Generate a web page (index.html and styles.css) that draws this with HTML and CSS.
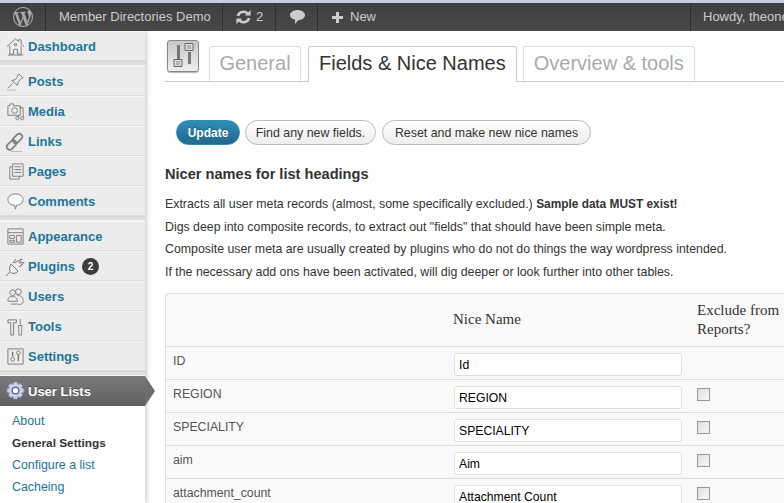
FILE: index.html
```html
<!DOCTYPE html>
<html lang="en">
<head>
  <meta charset="UTF-8">
  <meta name="viewport" content="width=device-width, initial-scale=1.0">
  <title>Fields &amp; Nice Names</title>
  <link rel="stylesheet" href="styles.css">
</head>
<body>

<div id="adminBar">
  <div class="barItem barLogo">
    <svg width="20" height="20" viewBox="0 0 20 20"><path fill="#a8a8a8" d="M20 10c0-5.51-4.49-10-10-10C4.48 0 0 4.49 0 10c0 5.52 4.48 10 10 10 5.51 0 10-4.48 10-10zM7.78 15.37L4.37 6.22c.55-.02 1.17-.08 1.17-.08.5-.06.44-1.13-.06-1.11 0 0-1.45.11-2.37.11-.18 0-.37 0-.58-.01C4.12 2.69 6.87 1.11 10 1.11c2.33 0 4.45.87 6.05 2.34-.68-.11-1.65.39-1.65 1.58 0 .74.45 1.36.9 2.1.35.61.55 1.36.55 2.46 0 1.49-1.4 5-1.4 5l-3.03-8.37c.54-.02.82-.17.82-.17.5-.05.44-1.25-.06-1.22 0 0-1.44.12-2.38.12-.87 0-2.33-.12-2.33-.12-.5-.03-.56 1.2-.06 1.22l.92.08 1.26 3.41zM17.41 10c.24-.64.74-1.87.43-4.25.7 1.29 1.05 2.71 1.05 4.25 0 3.29-1.73 6.24-4.4 7.78.97-2.59 1.94-5.2 2.92-7.78zM6.1 18.09C3.12 16.65 1.11 13.53 1.11 10c0-1.3.23-2.48.72-3.59C3.25 10.3 4.67 14.2 6.1 18.09zm4.03-6.63l2.58 6.98c-.86.29-1.76.45-2.71.45-.79 0-1.57-.11-2.29-.33.81-2.38 1.62-4.74 2.42-7.1z"/></svg>
  </div>
  <div class="barItem barSite">Member Directories Demo</div>
  <div class="barItem barUpdates">
    <svg width="15" height="14" viewBox="0 0 15 14"><path fill="none" stroke="#ccc" stroke-width="2.6" d="M2 6a5.5 5 0 0 1 9.600-2.400M13 8a5.500 5 0 0 1-9.600 2.400"/><path fill="#ccc" d="M9 5.400h5.600V0zM6 8.600H.4V14z"/></svg>
    <span>2</span>
  </div>
  <div class="barItem barComments">
    <svg width="15" height="14" viewBox="0 0 15 14"><path fill="#ccc" d="M7.500 0C11.600 0 15 2.200 15 5s-3 5-6.500 5L5 14V9.700C2 9.200 0 7.300 0 5 0 2.200 3.400 0 7.500 0z"/></svg>
  </div>
  <div class="barItem barNew">
    <svg width="11" height="11" viewBox="0 0 11 11"><path fill="#ccc" d="M4 0h3v4h4v3H7v4H4V7H0V4h4z"/></svg>
    <span>New</span>
  </div>
  <div class="barSpacer"></div>
  <div class="barItem barHowdy">Howdy, theone</div>
</div>

<div id="wrap">
  <div id="sideMenu">
    <a class="menuItem" href="#">
      <svg class="menuIcon" viewBox="0 0 20 20"><path class="ic" d="M1 10 10 2l3 2.700V3h3v4.400L19 10M4 9v9h4v-5h4v5h4V9M2 19h16M9 7h2v2H9z"/></svg>Dashboard</a>
    <div class="menuSep"></div>
    <a class="menuItem" href="#">
      <svg class="menuIcon" viewBox="0 0 20 20"><path class="ic" d="m13 2 5 4-2 1-3 3-1 4-6-5 4-1 2-3zM7 12l-5 5"/><path class="ic soft" d="M1 19h9"/></svg>Posts</a>
    <a class="menuItem" href="#">
      <svg class="menuIcon" viewBox="0 0 20 20"><path class="ic" d="M2 4h2V2h4v2h7v10H2z"/><circle class="ic" cx="9" cy="9" r="3"/><path class="ic" d="M14 6h4v10M13 14v3"/><circle class="ic" cx="12" cy="17" r="1.700"/><circle class="ic" cx="17" cy="17" r="1.700"/></svg>Media</a>
    <a class="menuItem" href="#">
      <svg class="menuIcon wide" viewBox="0 0 20 20"><rect class="ic thick" x="9.500" y="1" width="6" height="11" rx="3" transform="rotate(45 12.500 6.500)"/><rect class="ic thick" x="3.500" y="7.500" width="6" height="11" rx="3" transform="rotate(45 6.500 13)"/><path class="ic soft" d="M6 19.500h11"/></svg>Links</a>
    <a class="menuItem" href="#">
      <svg class="menuIcon" viewBox="0 0 20 20"><path class="ic" d="M7 2h11v13H7zM7 5H4v13h10v-3M9 5h7M9 8h7M9 11h7"/></svg>Pages</a>
    <a class="menuItem" href="#">
      <svg class="menuIcon" viewBox="0 0 20 20"><path class="ic filled" d="M10 2c4.500 0 8 2.500 8 6s-3.500 6-7 6l-1 4-1-4c-4-.3-7-2.600-7-6 0-3.500 3.500-6 8-6z"/></svg>Comments</a>
    <div class="menuSep"></div>
    <a class="menuItem" href="#">
      <svg class="menuIcon" viewBox="0 0 20 20"><path class="ic" d="M2 2h16v16H2zM2 6h16M4 9h5v3H4zM4 14h5v2H4zM11 9h5v7h-5z"/></svg>Appearance</a>
    <a class="menuItem" href="#">
      <svg class="menuIcon wide" viewBox="0 0 20 20"><path class="ic" d="m11 2-3 4M18 7l-4 3M6 7l7 7-2 2-4 .5-2-2L4.500 11zM5 15l-4 4"/><path class="ic" d="m9 6 8-4-3 4 5-.5-4 4"/></svg>Plugins<span class="countBadge">2</span></a>
    <a class="menuItem" href="#">
      <svg class="menuIcon" viewBox="0 0 20 20"><circle class="ic" cx="7" cy="6" r="3"/><circle class="ic" cx="13" cy="5" r="3"/><path class="ic" d="M2 15c0-5 3-5 5-5s5 1 5 5zM12 9c3 0 6 1 6 5 1 4-3 5-6 4H5"/></svg>Users</a>
    <a class="menuItem" href="#">
      <svg class="menuIcon" viewBox="0 0 20 20"><path class="ic" d="M2 3h9v3H8v13H5V6H2zM15 2v6M13 9h4l-.5 3v7h-3v-7z"/></svg>Tools</a>
    <a class="menuItem" href="#">
      <svg class="menuIcon" viewBox="0 0 20 20"><path class="ic" d="M2 2h16v16H2z"/><path class="ic thick" d="M7 5v5M13 8v7"/><circle class="ic" cx="7" cy="13" r="2"/><circle class="ic" cx="13" cy="6" r="2"/></svg>Settings</a>
    <div class="menuSep"></div>
    <a class="menuItem menuCurrent" href="#">
      <svg class="menuIcon" viewBox="0 0 20 20"><path fill="#c9d3ea" stroke="#7f8cb5" d="M8 1h4l.6 2.500 2.300-1 2.600 2.600-1 2.300L19 8v4l-2.500.6 1 2.300-2.600 2.600-2.300-1L12 19H8l-.6-2.500-2.300 1-2.600-2.600 1-2.300L1 12V8l2.500-.6-1-2.300 2.600-2.600 2.300 1z"/><circle fill="#fff" stroke="#5d6b99" stroke-width="1.500" cx="10" cy="10" r="3.500"/></svg>User Lists</a>
    <ul class="subMenu">
      <li><a href="#">About</a></li>
      <li><a class="subCurrent" href="#">General Settings</a></li>
      <li><a href="#">Configure a list</a></li>
      <li><a href="#">Cacheing</a></li>
    </ul>
  </div>

  <div id="content">
    <div class="tabRow">
      <div class="pageIcon">
        <svg width="32" height="32" viewBox="0 0 32 32"><path fill="#777" d="M10 5h3v17h-3zM21 12h3v12h-3z"/><path fill="#ddd" stroke="#666" d="M7 19.500h8v7H7zM18 3.500h8v7h-8z"/><path stroke="#888" d="M9 22h4M9 24h4M20 6h4M20 8h4"/></svg>
      </div>
      <a class="tab tabGeneral" href="#">General</a>
      <a class="tab tabActive" href="#">Fields &amp; Nice Names</a>
      <a class="tab tabOverview" href="#">Overview &amp; tools</a>
    </div>

    <div class="buttonRow">
      <button class="btn btnPrimary">Update</button>
      <button class="btn btnFind">Find any new fields.</button>
      <button class="btn btnReset">Reset and make new nice names</button>
    </div>

    <h3>Nicer names for list headings</h3>
    <p>Extracts all user meta records (almost, some specifically excluded.) <b>Sample data MUST exist!</b></p>
    <p>Digs deep into composite records, to extract out "fields" that should have been simple meta.</p>
    <p>Composite user meta are usually created by plugins who do not do things the way wordpress intended.</p>
    <p>If the necessary add ons have been activated, will dig deeper or look further into other tables.</p>

    <table class="fieldTable">
      <thead>
        <tr>
          <th class="colField"></th>
          <th class="colName">Nice Name</th>
          <th class="colExclude">Exclude from Reports?</th>
        </tr>
      </thead>
      <tbody>
        <tr>
          <td>ID</td>
          <td><input type="text" value="Id"></td>
          <td></td>
        </tr>
        <tr>
          <td>REGION</td>
          <td><input type="text" value="REGION"></td>
          <td><span class="checkBox"></span></td>
        </tr>
        <tr>
          <td>SPECIALITY</td>
          <td><input type="text" value="SPECIALITY"></td>
          <td><span class="checkBox"></span></td>
        </tr>
        <tr>
          <td>aim</td>
          <td><input type="text" value="Aim"></td>
          <td><span class="checkBox"></span></td>
        </tr>
        <tr>
          <td>attachment_count</td>
          <td><input type="text" value="Attachment Count"></td>
          <td><span class="checkBox"></span></td>
        </tr>
      </tbody>
    </table>
  </div>
</div>

</body>
</html>
```

FILE: styles.css
```css
html, body {
  height: 100%;
}

body {
  font-family: "Liberation Sans", Arial, sans-serif;
  background-color: #fff;
  margin: 0;
  overflow: hidden;
  color: #333;
  font-size: 12px;
}

a {
  text-decoration: none;
}

/* top bar */
#adminBar {
  display: flex;
  height: 28px;
  border-top: 3px solid #c3cee0;
  background: linear-gradient(to bottom, #3f3f3f, #494949);
  color: #ccc;
  font-size: 13px;
  line-height: 28px;
}

.barItem {
  display: flex;
  align-items: center;
  border-right: 1px solid #2f2f2f;
  box-sizing: border-box;
}

.barLogo {
  width: 46px;
  justify-content: center;
}

.barSite {
  width: 177px;
  padding-left: 13px;
}

.barUpdates {
  width: 53px;
  padding-left: 13px;
  gap: 5px;
}

.barComments {
  width: 42px;
  padding-left: 14px;
}

.barNew {
  width: 60px;
  padding-left: 14px;
  gap: 7px;
  border-right: none;
}

.barSpacer {
  flex: 1;
}

.barHowdy {
  width: 94px;
  flex-shrink: 0;
  padding-left: 12px;
  border-left: 1px solid #2f2f2f;
  border-right: none;
  white-space: nowrap;
}

/* left menu */
#wrap {
  display: flex;
  height: 472px;
}

#sideMenu {
  width: 145px;
  flex-shrink: 0;
  background-color: #ececec;
  box-shadow: 2px 0 4px rgba(0, 0, 0, 0.18);
  position: relative;
}

.menuItem {
  display: flex;
  align-items: center;
  height: 30px;
  box-sizing: border-box;
  padding-left: 28px;
  position: relative;
  color: #21759b;
  font-weight: bold;
  font-size: 13px;
  border-top: 1px solid #f6f6f6;
  border-bottom: 1px solid #dcdcdc;
}

.menuIcon {
  position: absolute;
  left: 6px;
  top: 5px;
  width: 19px;
  height: 19px;
}

.menuIcon.wide {
  left: 5px;
  width: 20px;
  height: 20px;
}

.ic {
  fill: none;
  stroke: #7d7d7d;
  stroke-width: 1;
}

.filled {
  fill: #f7f7f7;
}

.thick {
  stroke-width: 1.6;
}

.soft {
  stroke: #bbb;
}

.menuSep {
  height: 5px;
  box-sizing: border-box;
  background-color: #dfdfdf;
  border-top: 1px solid #d4d4d4;
  border-bottom: 1px solid #f4f4f4;
}

.countBadge {
  display: inline-block;
  width: 17px;
  height: 17px;
  margin-left: 7px;
  border-radius: 50%;
  background-color: #3d3d3d;
  color: #fff;
  font-size: 10px;
  line-height: 17px;
  text-align: center;
}

.menuCurrent {
  color: #fff;
  background: linear-gradient(to bottom, #7a7a7a, #606060);
  border: none;
  text-shadow: 0 -1px 0 #444;
}

.menuCurrent::after {
  content: "";
  position: absolute;
  right: -10px;
  top: 0;
  border-left: 10px solid #6d6d6d;
  border-top: 15px solid transparent;
  border-bottom: 15px solid transparent;
}

.subMenu {
  list-style: none;
  margin: 0;
  padding: 4px 0 0 12px;
  background-color: #fff;
  height: 94px;
  font-size: 12.4px;
}

.subMenu li {
  height: 22px;
  line-height: 22px;
}

.subMenu a {
  color: #21759b;
}

.subMenu .subCurrent {
  color: #333;
  font-weight: bold;
  font-size: 11.8px;
}

/* content */
#content {
  flex: 1;
  min-width: 0;
  padding: 0 0 0 20px;
}

.tabRow {
  display: flex;
  align-items: flex-end;
  height: 50px;
  border-bottom: 1px solid #ccc;
  position: relative;
}

.pageIcon {
  width: 32px;
  height: 32px;
  margin: 0 10px 9px 2px;
  align-self: flex-end;
  box-sizing: border-box;
  border: 1px solid #888;
  border-radius: 3px;
  background: linear-gradient(to bottom, #c8c8c8, #efefef);
  box-shadow: 0 1px 1px rgba(0, 0, 0, 0.3);
}

.pageIcon svg {
  display: block;
  margin: -1px;
}

.tab {
  display: block;
  height: 35px;
  box-sizing: border-box;
  border: 1px solid #ddd;
  border-bottom: none;
  border-radius: 3px 3px 0 0;
  padding: 0 10px;
  margin-right: 6px;
  font-size: 20px;
  line-height: 33px;
  color: #aaa;
  white-space: nowrap;
}

.tabGeneral {
  width: 92px;
  padding: 0;
  text-align: center;
  margin-right: 7px;
}

.tabActive {
  height: 36px;
  margin-bottom: -1px;
  background-color: #fff;
  border-color: #ccc;
  color: #333;
}

.buttonRow {
  display: flex;
  gap: 5px;
  margin: 38px 0 0 11px;
}

.btn {
  height: 25px;
  padding: 0;
  border: 1px solid #bbb;
  border-radius: 13px;
  background: linear-gradient(to bottom, #fff, #ededed);
  color: #333;
  font-family: inherit;
  font-size: 12.4px;
}

.btnPrimary {
  border-color: #298cba;
  width: 64px;
  background: linear-gradient(to bottom, #2e8db8, #21698c);
  color: #fff;
  font-size: 12px;
  font-weight: bold;
  text-shadow: 0 -1px 0 rgba(0, 0, 0, 0.3);
}

.btnFind {
  width: 131px;
}

.btnReset {
  width: 209px;
  margin-left: 1px;
}

h3 {
  margin: 21px 0 11px;
  font-size: 14.6px;
  line-height: 16px;
  color: #333;
}

p {
  margin: 0;
  height: 22.7px;
  line-height: 22.7px;
  font-size: 12.35px;
  white-space: nowrap;
}

p b {
  font-size: 11.9px;
}

.fieldTable {
  border-collapse: separate;
  border-spacing: 0;
  table-layout: fixed;
  width: 640px;
  margin-top: 9px;
  background-color: #f9f9f9;
  border: 1px solid #dfdfdf;
  border-radius: 3px;
  color: #555;
}

.fieldTable th {
  height: 53px;
  box-sizing: border-box;
  padding: 0;
  border-bottom: 1px solid #dfdfdf;
  font-family: "Liberation Serif", Georgia, serif;
  font-weight: normal;
  font-size: 15px;
  line-height: 19px;
  text-align: left;
  color: #333;
}

.colField {
  width: 287px;
}

.colName {
  width: 244px;
}

.fieldTable td {
  height: 33px;
  box-sizing: border-box;
  padding: 0;
  border-bottom: 1px solid #dfdfdf;
  vertical-align: top;
}

.fieldTable td:first-child {
  padding: 7px 0 0 7px;
  line-height: 15px;
  font-size: 12.3px;
}

.fieldTable input {
  display: block;
  width: 228px;
  height: 23px;
  box-sizing: border-box;
  margin: 6px 0 0 1px;
  padding: 2px 4px 0;
  border: 1px solid #dfdfdf;
  border-radius: 3px;
  background-color: #fff;
  color: #000;
  font-family: inherit;
  font-size: 12.2px;
}

.checkBox {
  display: block;
  width: 13px;
  height: 13px;
  box-sizing: border-box;
  margin-top: 8px;
  border: 1px solid #999;
  background: linear-gradient(135deg, #ddd, #f8f8f8);
}
```
